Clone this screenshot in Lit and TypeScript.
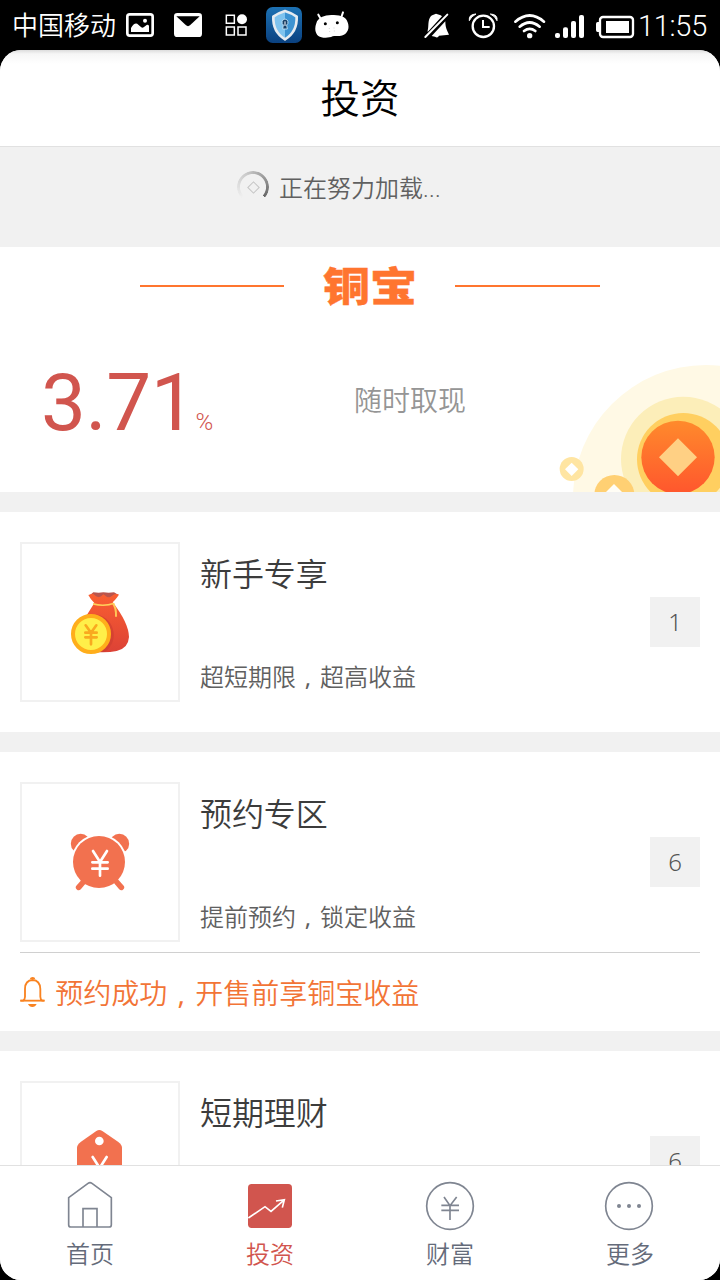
import { LitElement, html, svg, css, nothing } from "lit";
import { customElement, property } from "lit/decorators.js";

type Glyph = ReturnType<typeof svg>;

// Artwork is drawn on a grid of three units per CSS pixel.
const icon = (x: number, y: number, w: number, h: number, body: Glyph) => html`
  <svg width=${w / 3} height=${h / 3} viewBox="${x} ${y} ${w} ${h}">${body}</svg>`;

const gallery = svg`
  <rect x="382" y="43" width="76" height="64" rx="7" fill="none" stroke="#fff" stroke-width="8"/>
  <path d="M393 96V84q12-20 22-10l8 7q4 4 9 0l8-6q5-3 7 3v18z" fill="#fff"/>
  <circle cx="435" cy="62" r="6" fill="#fff"/>`;
const mail = svg`
  <rect x="522" y="39" width="84" height="72" rx="10" fill="#fff"/>
  <path d="M529 49h70l-29 27q-6 5-12 0z" fill="#000"/>`;
const apps = svg`
  <g fill="none" stroke="#fff" stroke-width="4.500"><path d="M679 46h24v24h-24zM679 81h24v24h-24zM714 81h24v24h-24z"/></g>
  <circle cx="726" cy="58" r="15" fill="#fff"/>`;
const shield = svg`
  <defs>
    <linearGradient id="tile" x2="0" y2="1"><stop stop-color="#1d72b4"/><stop offset="1" stop-color="#0a4180"/></linearGradient>
    <linearGradient id="core"><stop offset=".5" stop-color="#7fc3ee"/><stop offset=".5" stop-color="#3d93d2"/></linearGradient>
  </defs>
  <rect x="798" y="21" width="108" height="108" rx="20" fill="url(#tile)"/>
  <path d="M855 33q20 6 35 17 2 46-35 68-37-22-35-68 15-11 35-17z" fill="url(#core)" stroke="#e6ebf0" stroke-width="8" stroke-linejoin="round"/>
  <path d="M855 57a10 10 0 0 1 5 18l2 12h-14l2-12a10 10 0 0 1 5-18z" fill="#173f66" stroke="#b9dcf3" stroke-width="3"/>
  <path d="M855 64v14" stroke="#fff" stroke-width="3"/>`;
const robot = svg`
  <path d="M955 44l8 14M1029 37l-6 17" stroke="#fff" stroke-width="6" stroke-linecap="round"/>
  <path d="M949 70c4-17 24-25 45-25s43 2 49 22c9 24-7 41-25 41-9 0-14-1-20 1-8 4-18 5-28 4-22-1-29-22-21-43z" fill="#fff"/>
  <circle cx="976" cy="71" r="4.500" fill="#000"/><circle cx="1012" cy="68" r="4.500" fill="#000"/>
  <path d="M988 84v2M1002 83v2M989 94v2M1003 92v2" stroke="#aaa" stroke-width="2"/>`;

const muted = svg`
  <path d="M203 91c4-10-1-30 10-43 5-5 10-4 15-7 5 1 9 3 14 5l4 3-43 47zM256 64c0 17 4 25 11 40l-30 3q-4 9-12 3l-10-2z" fill="#fff"/>
  <path d="M196 111l66-67" stroke="#fff" stroke-width="6" stroke-linecap="round"/>`;
const alarm = svg`
  <circle cx="370" cy="79" r="32" fill="none" stroke="#fff" stroke-width="7"/>
  <path d="M369 60v21h20" fill="none" stroke="#fff" stroke-width="6"/>
  <path d="M328 62q-3-19 20-20-15 7-20 20zM411 62q3-19-20-20 15 7 20 20z" fill="#fff" stroke="#fff" stroke-width="3" stroke-linejoin="round"/>`;
const wifi = svg`
  <g fill="none" stroke="#fff" stroke-width="8" stroke-linecap="round">
    <path d="M466 65q43-37 86 0M479 80q30-25 60 0M492 93q17-13 34 0"/></g>
  <circle cx="509" cy="107" r="8" fill="#fff"/>`;
const signal = svg`
  <g fill="#fff"><rect x="585" y="99" width="15" height="15" rx="6"/><rect x="609" y="82" width="15" height="32" rx="6"/>
  <rect x="633" y="63" width="15" height="51" rx="6"/><rect x="657" y="45" width="15" height="69" rx="6"/></g>`;
const battery = svg`
  <rect x="720" y="51" width="99" height="60" rx="9" fill="none" stroke="#fff" stroke-width="7"/>
  <rect x="738" y="63" width="69" height="36" fill="#fff"/>
  <path d="M717 66h-4q-5 0-5 6v18q0 6 5 6h4z" fill="#fff"/>`;

const bag = svg`
  <defs>
    <linearGradient id="bag" x2="0" y2="1"><stop stop-color="#fa5f31"/><stop offset="1" stop-color="#dc4236"/></linearGradient>
  </defs>
  <path d="M240 195l10-8 16 1 14-1 16 1 16-1 14 8-16 14h-56z" fill="#b9544c"/>
  <path d="M235 195q8-3 14-4l9 8 8 3q8-2 14-9l10 7q7 4 12 0l11-7q6-2 13 0-1 8-18 24 48 62 49 104-2 34-37 42-30 6-75 2l-22-98q14-22 30-48-12-12-18-24z" fill="url(#bag)"/>
  <path d="M250 253a62 62 0 0 1 36 112h-40z" fill="#c93c30" opacity=".55"/>
  <path d="M249 219q31 9 61-1l5 3q-30 12-66 3z" fill="#ffd05a"/>
  <path d="M309 221q10 12 9 39" fill="none" stroke="#ffc858" stroke-width="6"/>
  <circle cx="243" cy="312" r="54" fill="#ffef49" stroke="#ffae1b" stroke-width="12"/>
  <path d="M227 286l16 22 16-22M243 308v35M226 308h34M226 322h34" fill="none" stroke="#f9a91f" stroke-width="8" stroke-linecap="round" stroke-linejoin="round"/>`;
const clock = svg`
  <circle cx="212" cy="221" r="29.500" fill="#f2714f"/><circle cx="328" cy="221" r="29.500" fill="#f2714f"/>
  <circle cx="267" cy="276" r="84" fill="#fff"/>
  <path d="M220 336l-14 16M320 336l14 16" stroke="#f2714f" stroke-width="17" stroke-linecap="round"/>
  <circle cx="267" cy="276" r="78" fill="#f2714f"/>
  <path d="M249 243l21 33 21-33M270 276v41M247 277h46M247 296h46" fill="none" stroke="#fff" stroke-width="8" stroke-linecap="round" stroke-linejoin="round"/>`;
const tag = svg`
  <path d="M259 183q9-6 18 0l47 32q12 9 12 18v140H201V233q0-9 12-18z" fill="#f2714f"/>
  <circle cx="268" cy="213" r="13" fill="#fff"/>
  <path d="M248 261l21 33 21-33M269 294v41M246 295h46M246 314h46" fill="none" stroke="#fff" stroke-width="8" stroke-linecap="round" stroke-linejoin="round"/>`;

const bell = svg`
  <path d="M31 692h8q6-4 6-12v-23q0-26 23-27 22 1 23 27v23q0 8 6 12h7" fill="none" stroke="#f98321" stroke-width="5.500" stroke-linejoin="round"/>
  <path d="M31 692h72" stroke="#f98321" stroke-width="5.500"/>
  <path d="M59 628q2-7 9-7t8 7zM54 702h26q-4 9-13 9t-13-9z" fill="#f98321"/>`;

const coins = svg`
  <defs><linearGradient id="coin" x2="0" y2="1"><stop stop-color="#ff8a2c"/><stop offset="1" stop-color="#ff562d"/></linearGradient></defs>
  <circle cx="498" cy="444" r="399" fill="#fff9e5"/>
  <circle cx="430" cy="327" r="187" fill="#fceeb9"/>
  <circle cx="430" cy="328" r="139" fill="#ffcf60"/>
  <circle cx="414" cy="322" r="110" fill="url(#coin)"/>
  <path d="M414 265l57 57-57 57-57-57z" fill="#ffd084"/>
  <circle cx="95" cy="357" r="36" fill="#ffe5a2"/>
  <path d="M95 338l20 20-20 20-20-20z" fill="#fff"/>
  <circle cx="223" cy="435" r="60" fill="#ffd073"/>
  <path d="M222 402l30 30-30 30-30-30z" fill="#fffdf5"/>`;

const home = svg`<path d="M176 383l58-43q6-4 12 0l58 43v81q0 7-7 7H183q-7 0-7-7zM219 471v-55h42v55" fill="none" stroke="#7f8591" stroke-width="5"/>`;
const chart = svg`
  <rect x="714" y="342" width="132" height="132" rx="11" fill="#d1554e"/>
  <path d="M715 444l50-34 18 14 38-33M798 393l25-4-6 24" fill="none" stroke="#fff" stroke-width="5"/>`;
const yuan = svg`
  <g fill="none" stroke="#7f8591"><circle cx="270" cy="258" r="70" stroke-width="5"/>
  <path d="M252 231l18 26 20-26M270 256v44M244 256h53M244 271h53" stroke-width="5"/></g>`;
const more = svg`
  <circle cx="807" cy="258" r="70" fill="none" stroke="#7f8591" stroke-width="5"/>
  <g fill="#7f8591"><circle cx="777" cy="258" r="6"/><circle cx="807" cy="258" r="6"/><circle cx="837" cy="258" r="6"/></g>`;

// Full-width commas sit in the middle of their cell.
const centred = (text: string) => {
  const [head, tail] = text.split(",");
  return html`${head}<span class="comma">,</span>${tail}`;
};

@customElement("status-bar")
class StatusBar extends LitElement {
  static styles = css`
    :host { display: flex; height: 50px; padding: 0 12px; justify-content: space-between; background: #000; color: #fff; }
    .group { display: flex; align-items: center; }
    .carrier { width: 112px; font-size: 26px; line-height: 48px; padding-bottom: 2px; white-space: nowrap; }
    .time { width: 70px; padding-top: 3px; font: 300 29px/47px Roboto, sans-serif; letter-spacing: -0.3px; white-space: nowrap; }
    svg { display: block; flex: none; }
  `;
  render() {
    return html`
      <div class="group"><span class="carrier">中国移动</span>
        ${icon(372, 0, 120, 150, gallery)}${icon(492, 0, 150, 150, mail)}${icon(642, 0, 126, 150, apps)}
        ${icon(768, 0, 156, 150, shield)}${icon(924, 0, 126, 150, robot)}</div>
      <div class="group">
        ${icon(180, 0, 120, 150, muted)}${icon(300, 0, 135, 150, alarm)}${icon(435, 0, 135, 150, wifi)}
        ${icon(570, 0, 120, 150, signal)}${icon(690, 0, 144, 150, battery)}<span class="time">11:55</span></div>`;
  }
}

@customElement("product-card")
class ProductCard extends LitElement {
  @property() heading = "";
  @property() summary = "";
  @property() count = "";
  @property() notice = "";
  @property({ attribute: false }) art: unknown = nothing;
  static styles = css`
    :host { display: block; flex: none; background: #fff; padding: 0 20px; }
    .row { display: flex; align-items: center; padding-top: 30px; height: 160px; padding-bottom: 30px; }
    .row.noted { padding-bottom: 10px; }
    .thumb { box-sizing: border-box; width: 160px; height: 160px; border: 2px solid #f1f1f1; flex: none; }
    .copy { flex: 1; height: 160px; padding-left: 20px; display: flex; flex-direction: column; justify-content: space-between; }
    .heading { font-size: 32px; line-height: 48px; margin-top: 6px; letter-spacing: -0.1px; color: #3c3c3c; }
    .summary { font-size: 24px; line-height: 36px; margin-bottom: 8px; color: #606060; }
    .count { width: 50px; height: 50px; background: #f1f1f1; color: #555; font: 350 24px/50px "Noto Sans", sans-serif; text-align: center; }
    .notice { display: flex; height: 78px; align-items: center; border-top: 1px solid #d0d0d0; font-size: 28px; color: #f27436; }
    .notice svg { margin-right: 10px; }
    .comma { display: inline-block; width: 1em; text-align: center; text-indent: 0; font-family: "Noto Sans", sans-serif; font-weight: 400; line-height: 1; }
    svg { display: block; }
  `;
  render() {
    return html`
      <div class="row ${this.notice ? "noted" : ""}">
        <div class="thumb">${this.art}</div>
        <div class="copy"><div class="heading">${this.heading}</div>
          <div class="summary">${this.summary ? centred(this.summary) : nothing}</div></div>
        <div class="count">${this.count}</div>
      </div>
      ${this.notice
        ? html`<div class="notice">${icon(30, 618, 76, 96, bell)}<span>${centred(this.notice)}</span></div>`
        : nothing}`;
  }
}

@customElement("app-root")
class AppRoot extends LitElement {
  static styles = css`
    :host { display: flex; flex-direction: column; width: 720px; height: 1280px; overflow: hidden; background: #000;
      font-family: "Noto Sans CJK SC", sans-serif; font-weight: 350; }
    .screen { flex: 1; min-height: 0; display: flex; flex-direction: column; overflow: hidden; border-radius: 21px; background: #f1f1f1; }
    header { flex: none; box-sizing: border-box; height: 97px; border-bottom: 1px solid #e1e1e1; font-size: 39.500px; line-height: 92px;
      text-align: center; color: #000; background: linear-gradient(#dcdcdc, #f6f6f6 4px, #fff 14px); }
    .content { flex: 1; min-height: 0; overflow: hidden; display: flex; flex-direction: column; gap: 20px; }
    .top { flex: none; }
    .loading { height: 100px; padding-left: 237px; padding-top: 24px; box-sizing: border-box; display: flex; align-items: flex-start; gap: 10px;
      font-size: 24px; line-height: 32px; color: #606060; }
    .spinner { width: 32px; height: 32px; display: grid; place-items: center; }
    .spinner > * { grid-area: 1 / 1; }
    .arc { width: 32px; height: 32px; border-radius: 50%; background: conic-gradient(from 225deg, rgba(110,110,110,0), rgba(110,110,110,.3) 110deg, #666 265deg, transparent 265deg);
      -webkit-mask: radial-gradient(circle, transparent 12.600px, #000 13.400px); }
    .hole { width: 7px; height: 7px; border: 1.500px solid #c4c4c4; transform: rotate(45deg); }
    .dots { font-family: Roboto, sans-serif; letter-spacing: 0.3px; }
    .hero { height: 245px; background: #fff; display: flex; flex-direction: column; }
    .brand { display: flex; flex: none; height: 78px; padding: 0 120px 0 140px; align-items: center; justify-content: space-between; }
    .rule { width: 145px; height: 2px; background: #ff752f; }
    .rule:first-child { width: 144px; }
    .name { font-size: 48px; line-height: 78px; font-weight: 900; color: #ff752f; -webkit-text-stroke: 0.5px #ff752f; transform: translate(1px, -3px) scale(0.98, 0.84); }
    .yield { flex: none; height: 167px; display: flex; }
    .rate { width: 354px; flex: none; box-sizing: border-box; padding-left: 41px; display: flex; align-items: baseline; color: #d1554e; font: 400 80px/156px Roboto, sans-serif; letter-spacing: -0.4px; }
    .percent { font-size: 24px; font-weight: 350; line-height: 30px; }
    .cash { width: 186px; flex: none; font-size: 28px; line-height: 148px; color: #959595; }
    .coins { align-self: flex-end; width: 180px; height: 128px; flex: none; }
    nav { flex: none; display: grid; grid-template-columns: repeat(4, 1fr); height: 114px; border-top: 1px solid #e1e1e1; background: #fff; color: #646b7a; font-size: 24px; }
    .tab { display: flex; flex-direction: column; align-items: center; padding-top: 16px; line-height: 45px; }
    .tab.on { color: #d1554e; }
    svg { display: block; overflow: visible; }
    .coins svg { overflow: hidden; }
  `;
  render() {
    return html`
      <status-bar></status-bar>
      <div class="screen">
        <header>投资</header>
        <div class="content">
          <div class="top">
            <div class="loading"><div class="spinner"><i class="arc"></i><i class="hole"></i></div>
              <span>正在努力加载<span class="dots">...</span></span></div>
            <section class="hero">
              <div class="brand"><i class="rule"></i><span class="name">铜宝</span><i class="rule"></i></div>
              <div class="yield"><div class="rate">3.71<span class="percent">%</span></div>
                <div class="cash">随时取现</div>
                <div class="coins">${icon(0, 42, 540, 384, coins)}</div></div>
            </section>
          </div>
          <product-card heading="新手专享" summary="超短期限,超高收益" count="1" .art=${icon(36, 42, 468, 468, bag)}></product-card>
          <product-card heading="预约专区" summary="提前预约,锁定收益" count="6" notice="预约成功,开售前享铜宝收益"
            .art=${icon(36, 42, 468, 468, clock)}></product-card>
          <product-card heading="短期理财" count="6" .art=${icon(36, 39, 468, 468, tag)}></product-card>
        </div>
        <nav>
          <div class="tab">${icon(168, 336, 144, 144, home)}首页</div>
          <div class="tab on">${icon(708, 336, 144, 144, chart)}投资</div>
          <div class="tab">${icon(198, 186, 144, 144, yuan)}财富</div>
          <div class="tab">${icon(738, 186, 144, 144, more)}更多</div>
        </nav>
      </div>`;
  }
}
